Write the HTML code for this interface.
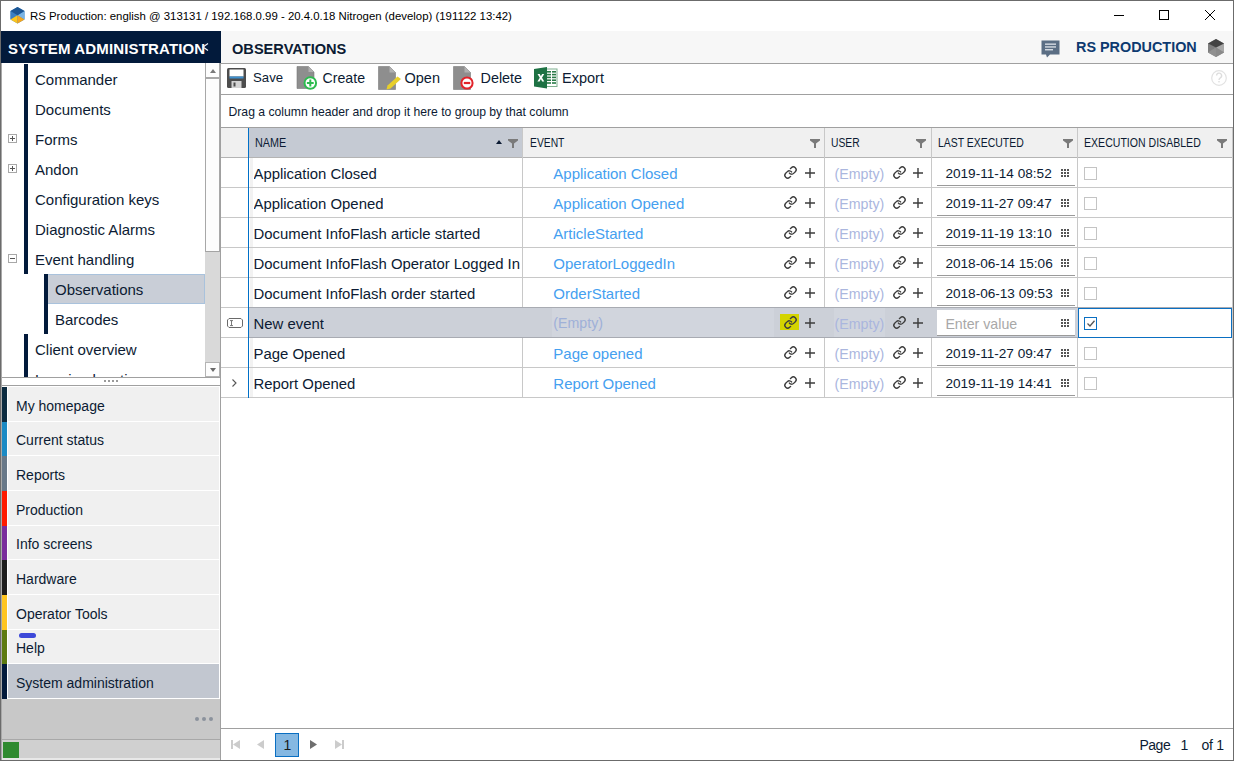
<!DOCTYPE html>
<html><head><meta charset="utf-8">
<style>
*{margin:0;padding:0;box-sizing:border-box}
html,body{width:1234px;height:761px;overflow:hidden;background:#fff}
body{position:relative;font-family:"Liberation Sans",sans-serif;color:#0c1b33}
.a{position:absolute}
.t{position:absolute;white-space:nowrap;line-height:1}
svg{position:absolute;overflow:visible}
</style></head><body>
<!-- window border -->
<div class="a" style="left:0;top:0;width:1234px;height:761px;border:1px solid #6b6b6b;z-index:50;pointer-events:none"></div>
<div class="a" style="left:1px;top:63px;width:1px;height:697px;background:#a8a8a8;z-index:49"></div>

<!-- TITLE BAR -->
<div class="a" style="left:1px;top:1px;width:1232px;height:30px;background:#fff"></div>
<svg style="left:10px;top:7px" width="15" height="17" viewBox="0 0 15 17">
  <polygon points="7.5,0 14.5,4 14.5,12.5 7.5,16.5 0.5,12.5 0.5,4" fill="#3b82c4"/>
  <polygon points="0.5,4 7.5,8.2 0.5,12.5" fill="#3a7fc2"/>
  <polygon points="14.5,4 14.5,12.5 7.5,8.2" fill="#7ab4e4"/>
  <polygon points="0.5,12.5 7.5,8.2 7.5,16.5" fill="#fcc51c"/>
  <polygon points="14.5,12.5 7.5,8.2 7.5,16.5" fill="#f5a61d"/>
  <polygon points="7.5,0 14.5,4 7.5,8.2 0.5,4" fill="#1c5694"/>
</svg>
<div class="t" style="left:30px;top:11.1px;font-size:11.4px;color:#000">RS Production: english @ 313131 / 192.168.0.99 - 20.4.0.18 Nitrogen (develop) (191122 13:42)</div>
<div class="a" style="left:1114px;top:15px;width:10px;height:1px;background:#000"></div>
<div class="a" style="left:1159px;top:10px;width:10px;height:10px;border:1px solid #000"></div>
<svg style="left:1205px;top:10px" width="10" height="10" viewBox="0 0 10 10"><path d="M0 0L10 10M10 0L0 10" stroke="#000" stroke-width="1"/></svg>


<!-- LEFT PANEL -->
<div class="a" style="left:1px;top:31px;width:220px;height:32px;background:#021a3b"></div>
<div class="t" style="left:8px;top:41px;font-size:15px;font-weight:bold;color:#fff;letter-spacing:0.15px">SYSTEM ADMINISTRATION</div>
<svg style="left:202px;top:43px" width="7" height="8" viewBox="0 0 7 8"><path d="M6 0.5L1 4L6 7.5" stroke="#f0f2f6" stroke-width="1.2" fill="none"/></svg>
<!-- tree -->
<div class="a" style="left:2px;top:63px;width:203px;height:314px;background:#fff;overflow:hidden">
  <div class="a" style="left:22px;top:1px;width:4px;height:210px;background:#021a3b"></div>
  <div class="a" style="left:42px;top:211px;width:4px;height:60px;background:#021a3b"></div>
  <div class="a" style="left:22px;top:271px;width:4px;height:43px;background:#021a3b"></div>
  <div class="a" style="left:43px;top:211px;width:160px;height:30px;background:#c9ced7;border:1px solid #a9c2dc;border-left:none"></div>
  <div class="a" style="left:42px;top:211px;width:4px;height:30px;background:#021a3b"></div>
  <div class="t" style="left:33px;top:9.3px;font-size:15px">Commander</div>
  <div class="t" style="left:33px;top:39.3px;font-size:15px">Documents</div>
  <div class="t" style="left:33px;top:69.3px;font-size:15px">Forms</div>
  <div class="t" style="left:33px;top:99.3px;font-size:15px">Andon</div>
  <div class="t" style="left:33px;top:129.3px;font-size:15px">Configuration keys</div>
  <div class="t" style="left:33px;top:159.3px;font-size:15px">Diagnostic Alarms</div>
  <div class="t" style="left:33px;top:189.3px;font-size:15px">Event handling</div>
  <div class="t" style="left:53px;top:219.3px;font-size:15px">Observations</div>
  <div class="t" style="left:53px;top:249.3px;font-size:15px">Barcodes</div>
  <div class="t" style="left:33px;top:279.3px;font-size:15px">Client overview</div>
  <div class="t" style="left:33px;top:309.3px;font-size:15px">Logging location</div>
  <!-- expanders -->
  <div class="a" style="left:6px;top:71px;width:9px;height:9px;border:1px solid #a8a8a8"></div>
  <div class="a" style="left:8px;top:75px;width:5px;height:1px;background:#555"></div>
  <div class="a" style="left:10px;top:73px;width:1px;height:5px;background:#555"></div>
  <div class="a" style="left:6px;top:101px;width:9px;height:9px;border:1px solid #a8a8a8"></div>
  <div class="a" style="left:8px;top:105px;width:5px;height:1px;background:#555"></div>
  <div class="a" style="left:10px;top:103px;width:1px;height:5px;background:#555"></div>
  <div class="a" style="left:6px;top:191px;width:9px;height:9px;border:1px solid #a8a8a8"></div>
  <div class="a" style="left:8px;top:195px;width:5px;height:1px;background:#555"></div>
</div>
<!-- scrollbar -->
<div class="a" style="left:205px;top:63px;width:15px;height:314px;background:#d9d9d9"></div>
<div class="a" style="left:205px;top:63px;width:15px;height:189px;background:#fdfdfd;border:1px solid #a8a8a8;border-top:none;border-bottom:1.5px solid #a4a4a4"></div>
<div class="a" style="left:206px;top:77px;width:13px;height:1.5px;background:#a8a8a8"></div>
<svg style="left:209.8px;top:69px" width="6" height="4" viewBox="0 0 6 4"><polygon points="3,0 6,4 0,4" fill="#7a7a7a"/></svg>
<div class="a" style="left:205px;top:362px;width:15px;height:15px;background:#fdfdfd;border:1px solid #b4b4b4"></div>
<svg style="left:209.8px;top:367.8px" width="6" height="4" viewBox="0 0 6 4"><polygon points="0,0 6,0 3,4" fill="#6a6a6a"/></svg>
<!-- vertical separator -->
<div class="a" style="left:220px;top:63px;width:1px;height:698px;background:#a0a0a0"></div>
<!-- splitter -->
<div class="a" style="left:2px;top:377px;width:218px;height:1px;background:#a0a0a0"></div>
<div class="a" style="left:2px;top:378px;width:218px;height:7px;background:#fff"></div>
<div class="a" style="left:2px;top:385px;width:218px;height:1px;background:#a0a0a0"></div>
<div class="a" style="left:104px;top:380px;width:2px;height:2px;background:#9a9a9a"></div><div class="a" style="left:108px;top:380px;width:2px;height:2px;background:#9a9a9a"></div><div class="a" style="left:112px;top:380px;width:2px;height:2px;background:#9a9a9a"></div><div class="a" style="left:116px;top:380px;width:2px;height:2px;background:#9a9a9a"></div>
<!-- nav buttons -->
<div class="a" style="left:2px;top:386px;width:218px;height:313px;background:#fff"></div>
<div class="a" style="left:8px;top:387.00px;width:211px;height:33.67px;background:#f0f0f0"></div>
<div class="a" style="left:2px;top:387.00px;width:5px;height:34.67px;background:#0c2b40"></div>
<div class="t" style="left:16px;top:398.50px;font-size:14px">My homepage</div>
<div class="a" style="left:8px;top:421.67px;width:211px;height:33.67px;background:#f0f0f0"></div>
<div class="a" style="left:2px;top:421.67px;width:5px;height:34.67px;background:#1b8ac4"></div>
<div class="t" style="left:16px;top:433.17px;font-size:14px">Current status</div>
<div class="a" style="left:8px;top:456.33px;width:211px;height:33.67px;background:#f0f0f0"></div>
<div class="a" style="left:2px;top:456.33px;width:5px;height:34.67px;background:#687888"></div>
<div class="t" style="left:16px;top:467.83px;font-size:14px">Reports</div>
<div class="a" style="left:8px;top:491.00px;width:211px;height:33.67px;background:#f0f0f0"></div>
<div class="a" style="left:2px;top:491.00px;width:5px;height:34.67px;background:#ff1a00"></div>
<div class="t" style="left:16px;top:502.50px;font-size:14px">Production</div>
<div class="a" style="left:8px;top:525.67px;width:211px;height:33.67px;background:#f0f0f0"></div>
<div class="a" style="left:2px;top:525.67px;width:5px;height:34.67px;background:#7a2d9c"></div>
<div class="t" style="left:16px;top:537.17px;font-size:14px">Info screens</div>
<div class="a" style="left:8px;top:560.34px;width:211px;height:33.67px;background:#f0f0f0"></div>
<div class="a" style="left:2px;top:560.34px;width:5px;height:34.67px;background:#1c1c1c"></div>
<div class="t" style="left:16px;top:571.84px;font-size:14px">Hardware</div>
<div class="a" style="left:8px;top:595.00px;width:211px;height:33.67px;background:#f0f0f0"></div>
<div class="a" style="left:2px;top:595.00px;width:5px;height:34.67px;background:#ffc520"></div>
<div class="t" style="left:16px;top:606.50px;font-size:14px">Operator Tools</div>
<div class="a" style="left:8px;top:629.67px;width:211px;height:33.67px;background:#f0f0f0"></div>
<div class="a" style="left:2px;top:629.67px;width:5px;height:34.67px;background:#5d7a10"></div>
<div class="t" style="left:16px;top:641.17px;font-size:14px">Help</div>
<div class="a" style="left:8px;top:664.34px;width:211px;height:33.67px;background:#c2c7d0"></div>
<div class="a" style="left:2px;top:664.34px;width:5px;height:34.67px;background:#021a3b"></div>
<div class="t" style="left:16px;top:675.84px;font-size:14px">System administration</div>
<div class="a" style="left:18.8px;top:633.3px;width:17.6px;height:5px;border-radius:3px;background:#3c48d8"></div>
<!-- gray area -->
<div class="a" style="left:2px;top:699px;width:218px;height:40px;background:#c8c8c8"></div>
<div class="a" style="left:195px;top:717px;width:4px;height:4px;border-radius:2px;background:#8b929c"></div>
<div class="a" style="left:202px;top:717px;width:4px;height:4px;border-radius:2px;background:#8b929c"></div>
<div class="a" style="left:209px;top:717px;width:4px;height:4px;border-radius:2px;background:#8b929c"></div>
<div class="a" style="left:2px;top:739px;width:218px;height:1px;background:#a8a8a8"></div>
<div class="a" style="left:2px;top:740px;width:218px;height:18px;background:#d0d0d0"></div><div class="a" style="left:2px;top:758px;width:218px;height:2px;background:#e8e8e8"></div>
<div class="a" style="left:3px;top:742px;width:16px;height:16px;background:#2f8a30"></div>

<!-- RIGHT HEADER -->
<div class="a" style="left:221px;top:31px;width:1012px;height:32px;background:#f7f7f7"></div>
<div class="t" style="left:232px;top:41.5px;font-size:14.6px;font-weight:bold;color:#0c1b33">OBSERVATIONS</div>
<svg style="left:1040.5px;top:39.8px" width="20" height="18" viewBox="0 0 20 18">
  <path d="M0.5 0.5H18.5V14.5H9L6 17.5L5 14.5H0.5Z" fill="#5b6e84"/>
  <rect x="4" y="3.5" width="11" height="1.3" fill="#dfe4ea"/>
  <rect x="4" y="6.3" width="11" height="1.3" fill="#dfe4ea"/>
  <rect x="4" y="9.1" width="8" height="1.3" fill="#dfe4ea"/>
</svg>
<div class="t" style="left:1076px;top:40.4px;font-size:14.4px;font-weight:bold;color:#0d3a70">RS PRODUCTION</div>
<svg style="left:1208px;top:38.5px" width="16" height="18" viewBox="0 0 16 18">
  <polygon points="8,0 16,4.6 16,13.4 8,18 0,13.4 0,4.6" fill="#8c8c8c"/>
  <polygon points="0,4.6 8,8.6 0,13.4" fill="#7e7e7e"/>
  <polygon points="16,4.6 16,13.4 8,8.6" fill="#a8a8a8"/>
  <polygon points="0,13.4 8,8.6 8,18" fill="#909090"/>
  <polygon points="16,13.4 8,8.6 8,18" fill="#8a8a8a"/>
  <polygon points="8,0 16,4.6 8,8.6 0,4.6" fill="#434343"/>
</svg>
<div class="a" style="left:221px;top:63px;width:1012px;height:1px;background:#a0a0a0"></div>
<!-- TOOLBAR -->
<svg style="left:227px;top:68px" width="19" height="20" viewBox="0 0 19 20">
  <rect x="0" y="0" width="19" height="20" rx="1.5" fill="#4d4d4d"/>
  <rect x="2.5" y="1.5" width="14" height="7" fill="#fff"/>
  <rect x="2.5" y="8.5" width="14" height="2" fill="#3d90cf"/>
  <rect x="4.5" y="13" width="10" height="7" fill="#d4d4d4"/>
  <rect x="6.5" y="14.5" width="2" height="4" fill="#4d4d4d"/>
</svg>
<div class="t" style="left:253px;top:71px;font-size:13.2px">Save</div>
<svg style="left:296px;top:66px" width="23" height="24" viewBox="0 0 23 24">
  <path d="M1 0.5H12.5L18 6V22.5H1Z" fill="#8e8e8e" stroke="#7a7a7a" stroke-width="0.6"/>
  <path d="M12.5 0.5V6H18Z" fill="#b0b0b0"/>
  <circle cx="14.3" cy="17" r="5.8" fill="#fff" stroke="#2dbb4f" stroke-width="2"/>
  <path d="M14.3 13.6V20.4M10.9 17H17.7" stroke="#2dbb4f" stroke-width="2"/>
</svg>
<div class="t" style="left:322.5px;top:71px;font-size:14.2px">Create</div>
<svg style="left:378px;top:66px" width="24" height="24" viewBox="0 0 24 24">
  <path d="M0.5 0.5H11.5L17.5 6.5V23.5H0.5Z" fill="#8e8e8e" stroke="#7a7a7a" stroke-width="0.6"/>
  <path d="M11.5 0.5V6.5H17.5Z" fill="#b0b0b0"/>
  <path d="M19.5 10.5L23 13L12.5 22.5L8.5 23.5L9.5 19.5Z" fill="#e8cf2a"/>
</svg>
<div class="t" style="left:404.5px;top:71px;font-size:14.5px">Open</div>
<svg style="left:453px;top:66px" width="23" height="24" viewBox="0 0 23 24">
  <path d="M0.5 0.5H11.5L17.5 6.5V23.5H0.5Z" fill="#8e8e8e" stroke="#7a7a7a" stroke-width="0.6"/>
  <path d="M11.5 0.5V6.5H17.5Z" fill="#b0b0b0"/>
  <circle cx="14" cy="17" r="5.6" fill="#fff" stroke="#e2242b" stroke-width="2"/>
  <path d="M10.8 17H17.2" stroke="#e2242b" stroke-width="2.2"/>
</svg>
<div class="t" style="left:480.5px;top:71px;font-size:14.4px">Delete</div>
<svg style="left:534px;top:67px" width="24" height="22" viewBox="0 0 24 22">
  <rect x="12" y="2" width="11" height="17.5" fill="#fff" stroke="#7fb08f" stroke-width="1"/>
  <g fill="#2a7a47"><rect x="13" y="4" width="4" height="1.6"/><rect x="18" y="4" width="4" height="1.6"/><rect x="13" y="6.8" width="4" height="1.6"/><rect x="18" y="6.8" width="4" height="1.6"/><rect x="13" y="9.6" width="4" height="1.6"/><rect x="18" y="9.6" width="4" height="1.6"/><rect x="13" y="12.4" width="4" height="1.6"/><rect x="18" y="12.4" width="4" height="1.6"/><rect x="13" y="15.2" width="4" height="1.6"/><rect x="18" y="15.2" width="4" height="1.6"/></g>
  <path d="M0 2L13 0V21.5L0 19.5Z" fill="#1e7244"/>
  <path d="M3.5 7H5.7L6.9 9.3L8.1 7H10.2L8 10.7L10.3 14.4H8.1L6.9 12.1L5.6 14.4H3.4L5.8 10.7Z" fill="#fff"/>
</svg>
<div class="t" style="left:562px;top:71px;font-size:14.5px">Export</div>
<svg style="left:1211px;top:70px" width="16" height="16" viewBox="0 0 16 16">
  <circle cx="8" cy="8" r="7.3" fill="none" stroke="#e2e2e2" stroke-width="1.2"/>
  <path d="M5.6 5.6A2.5 2.5 0 1 1 9.3 7.8C8.4 8.3 8 8.8 8 9.9" fill="none" stroke="#dddddd" stroke-width="1.4"/><rect x="7.3" y="11" width="1.4" height="1.4" fill="#dddddd"/>
</svg>
<div class="a" style="left:221px;top:94px;width:1012px;height:1px;background:#a0a0a0"></div>
<!-- GROUP PANEL -->
<div class="t" style="left:228.5px;top:106.3px;font-size:12.2px">Drag a column header and drop it here to group by that column</div>
<div class="a" style="left:221px;top:127px;width:1012px;height:1px;background:#a0a0a0"></div>

<!-- GRID HEADER -->
<div class="a" style="left:221px;top:128px;width:1011px;height:29px;background:#f0f0f0"></div>
<div class="a" style="left:249px;top:128px;width:273px;height:29px;background:#c5cad3"></div>
<div class="a" style="left:221px;top:157px;width:1011px;height:1px;background:#b4b4b4"></div>
<div class="a" style="left:522px;top:128px;width:1px;height:270px;background:#c8c8c8"></div>
<div class="a" style="left:824px;top:128px;width:1px;height:270px;background:#c8c8c8"></div>
<div class="a" style="left:931px;top:128px;width:1px;height:270px;background:#c8c8c8"></div>
<div class="a" style="left:1077px;top:128px;width:1px;height:270px;background:#c8c8c8"></div>
<div class="a" style="left:1232px;top:128px;width:1px;height:270px;background:#c8c8c8"></div>
<div class="t" style="left:254.5px;top:136.6px;font-size:12px;transform:scaleX(0.9);transform-origin:0 0">NAME</div>
<div class="t" style="left:530px;top:136.6px;font-size:12px;transform:scaleX(0.86);transform-origin:0 0">EVENT</div>
<div class="t" style="left:831px;top:136.6px;font-size:12px;transform:scaleX(0.86);transform-origin:0 0">USER</div>
<div class="t" style="left:938px;top:136.6px;font-size:12px;transform:scaleX(0.87);transform-origin:0 0">LAST EXECUTED</div>
<div class="t" style="left:1084px;top:136.6px;font-size:12px;transform:scaleX(0.88);transform-origin:0 0">EXECUTION DISABLED</div>
<svg style="left:495.5px;top:140px" width="6" height="4" viewBox="0 0 6 4"><polygon points="3,0 6,4 0,4" fill="#0c1b33"/></svg>
<svg style="left:507.5px;top:139px" width="10" height="9" viewBox="0 0 10 9"><path d="M0 0H10V1.5L6 4.5V9H4V4.5L0 1.5Z" fill="#7a7a7a"/></svg>
<svg style="left:809.5px;top:139px" width="10" height="9" viewBox="0 0 10 9"><path d="M0 0H10V1.5L6 4.5V9H4V4.5L0 1.5Z" fill="#7a7a7a"/></svg>
<svg style="left:916.3px;top:139px" width="10" height="9" viewBox="0 0 10 9"><path d="M0 0H10V1.5L6 4.5V9H4V4.5L0 1.5Z" fill="#7a7a7a"/></svg>
<svg style="left:1062.5px;top:139px" width="10" height="9" viewBox="0 0 10 9"><path d="M0 0H10V1.5L6 4.5V9H4V4.5L0 1.5Z" fill="#7a7a7a"/></svg>
<svg style="left:1216.5px;top:139px" width="10" height="9" viewBox="0 0 10 9"><path d="M0 0H10V1.5L6 4.5V9H4V4.5L0 1.5Z" fill="#7a7a7a"/></svg>
<div class="a" style="left:221px;top:187px;width:1011px;height:1px;background:#c8c8c8"></div>
<div class="t" style="left:253.5px;top:166.8px;font-size:14.9px;max-width:267.5px;overflow:hidden">Application Closed</div>
<div class="t" style="left:553.3px;top:165.7px;font-size:15px;color:#45a0f0">Application Closed</div>
<svg style="left:783.5px;top:166px" width="13" height="13" viewBox="0.5 0.5 23 23"><g fill="none" stroke="#3c3c3c" stroke-width="2.4" stroke-linecap="round"><path d="M10 13a5 5 0 0 0 7.54.54l3-3a5 5 0 0 0-7.07-7.07l-1.72 1.71"/><path d="M14 11a5 5 0 0 0-7.54-.54l-3 3a5 5 0 0 0 7.07 7.07l1.71-1.71"/></g></svg><svg style="left:805px;top:168px" width="10" height="10" viewBox="0 0 10 10"><path d="M5 0V10M0 5H10" stroke="#3c3c3c" stroke-width="1.4"/></svg>
<div class="t" style="left:834.6px;top:166.9px;font-size:14.2px;color:#aab6de">(Empty)</div>
<svg style="left:893.2px;top:166px" width="13" height="13" viewBox="0.5 0.5 23 23"><g fill="none" stroke="#3c3c3c" stroke-width="2.4" stroke-linecap="round"><path d="M10 13a5 5 0 0 0 7.54.54l3-3a5 5 0 0 0-7.07-7.07l-1.72 1.71"/><path d="M14 11a5 5 0 0 0-7.54-.54l-3 3a5 5 0 0 0 7.07 7.07l1.71-1.71"/></g></svg><svg style="left:912.8px;top:168px" width="10" height="10" viewBox="0 0 10 10"><path d="M5 0V10M0 5H10" stroke="#3c3c3c" stroke-width="1.4"/></svg>
<div class="t" style="left:945.4px;top:166.5px;font-size:13.6px">2019-11-14 08:52</div>
<div class="a" style="left:937px;top:185px;width:138px;height:1px;background:#9a9a9a"></div>
<div class="a" style="left:1084px;top:166.5px;width:13px;height:13px;border:1px solid #c4c4c4;background:#fff"></div>
<svg style="left:1061px;top:169.3px" width="8" height="8" viewBox="0 0 8 8" fill="#555"><rect x="0" y="0" width="2" height="2"/><rect x="0" y="3" width="2" height="2"/><rect x="0" y="6" width="2" height="2"/><rect x="3" y="0" width="2" height="2"/><rect x="3" y="3" width="2" height="2"/><rect x="3" y="6" width="2" height="2"/><rect x="6" y="0" width="2" height="2"/><rect x="6" y="3" width="2" height="2"/><rect x="6" y="6" width="2" height="2"/></svg>
<div class="a" style="left:221px;top:217px;width:1011px;height:1px;background:#c8c8c8"></div>
<div class="t" style="left:253.5px;top:196.8px;font-size:14.9px;max-width:267.5px;overflow:hidden">Application Opened</div>
<div class="t" style="left:553.3px;top:195.7px;font-size:15px;color:#45a0f0">Application Opened</div>
<svg style="left:783.5px;top:196px" width="13" height="13" viewBox="0.5 0.5 23 23"><g fill="none" stroke="#3c3c3c" stroke-width="2.4" stroke-linecap="round"><path d="M10 13a5 5 0 0 0 7.54.54l3-3a5 5 0 0 0-7.07-7.07l-1.72 1.71"/><path d="M14 11a5 5 0 0 0-7.54-.54l-3 3a5 5 0 0 0 7.07 7.07l1.71-1.71"/></g></svg><svg style="left:805px;top:198px" width="10" height="10" viewBox="0 0 10 10"><path d="M5 0V10M0 5H10" stroke="#3c3c3c" stroke-width="1.4"/></svg>
<div class="t" style="left:834.6px;top:196.9px;font-size:14.2px;color:#aab6de">(Empty)</div>
<svg style="left:893.2px;top:196px" width="13" height="13" viewBox="0.5 0.5 23 23"><g fill="none" stroke="#3c3c3c" stroke-width="2.4" stroke-linecap="round"><path d="M10 13a5 5 0 0 0 7.54.54l3-3a5 5 0 0 0-7.07-7.07l-1.72 1.71"/><path d="M14 11a5 5 0 0 0-7.54-.54l-3 3a5 5 0 0 0 7.07 7.07l1.71-1.71"/></g></svg><svg style="left:912.8px;top:198px" width="10" height="10" viewBox="0 0 10 10"><path d="M5 0V10M0 5H10" stroke="#3c3c3c" stroke-width="1.4"/></svg>
<div class="t" style="left:945.4px;top:196.5px;font-size:13.6px">2019-11-27 09:47</div>
<div class="a" style="left:937px;top:215px;width:138px;height:1px;background:#9a9a9a"></div>
<div class="a" style="left:1084px;top:196.5px;width:13px;height:13px;border:1px solid #c4c4c4;background:#fff"></div>
<svg style="left:1061px;top:199.3px" width="8" height="8" viewBox="0 0 8 8" fill="#555"><rect x="0" y="0" width="2" height="2"/><rect x="0" y="3" width="2" height="2"/><rect x="0" y="6" width="2" height="2"/><rect x="3" y="0" width="2" height="2"/><rect x="3" y="3" width="2" height="2"/><rect x="3" y="6" width="2" height="2"/><rect x="6" y="0" width="2" height="2"/><rect x="6" y="3" width="2" height="2"/><rect x="6" y="6" width="2" height="2"/></svg>
<div class="a" style="left:221px;top:247px;width:1011px;height:1px;background:#c8c8c8"></div>
<div class="t" style="left:253.5px;top:226.8px;font-size:14.9px;max-width:267.5px;overflow:hidden">Document InfoFlash article started</div>
<div class="t" style="left:553.3px;top:225.7px;font-size:15px;color:#45a0f0">ArticleStarted</div>
<svg style="left:783.5px;top:226px" width="13" height="13" viewBox="0.5 0.5 23 23"><g fill="none" stroke="#3c3c3c" stroke-width="2.4" stroke-linecap="round"><path d="M10 13a5 5 0 0 0 7.54.54l3-3a5 5 0 0 0-7.07-7.07l-1.72 1.71"/><path d="M14 11a5 5 0 0 0-7.54-.54l-3 3a5 5 0 0 0 7.07 7.07l1.71-1.71"/></g></svg><svg style="left:805px;top:228px" width="10" height="10" viewBox="0 0 10 10"><path d="M5 0V10M0 5H10" stroke="#3c3c3c" stroke-width="1.4"/></svg>
<div class="t" style="left:834.6px;top:226.9px;font-size:14.2px;color:#aab6de">(Empty)</div>
<svg style="left:893.2px;top:226px" width="13" height="13" viewBox="0.5 0.5 23 23"><g fill="none" stroke="#3c3c3c" stroke-width="2.4" stroke-linecap="round"><path d="M10 13a5 5 0 0 0 7.54.54l3-3a5 5 0 0 0-7.07-7.07l-1.72 1.71"/><path d="M14 11a5 5 0 0 0-7.54-.54l-3 3a5 5 0 0 0 7.07 7.07l1.71-1.71"/></g></svg><svg style="left:912.8px;top:228px" width="10" height="10" viewBox="0 0 10 10"><path d="M5 0V10M0 5H10" stroke="#3c3c3c" stroke-width="1.4"/></svg>
<div class="t" style="left:945.4px;top:226.5px;font-size:13.6px">2019-11-19 13:10</div>
<div class="a" style="left:937px;top:245px;width:138px;height:1px;background:#9a9a9a"></div>
<div class="a" style="left:1084px;top:226.5px;width:13px;height:13px;border:1px solid #c4c4c4;background:#fff"></div>
<svg style="left:1061px;top:229.3px" width="8" height="8" viewBox="0 0 8 8" fill="#555"><rect x="0" y="0" width="2" height="2"/><rect x="0" y="3" width="2" height="2"/><rect x="0" y="6" width="2" height="2"/><rect x="3" y="0" width="2" height="2"/><rect x="3" y="3" width="2" height="2"/><rect x="3" y="6" width="2" height="2"/><rect x="6" y="0" width="2" height="2"/><rect x="6" y="3" width="2" height="2"/><rect x="6" y="6" width="2" height="2"/></svg>
<div class="a" style="left:221px;top:277px;width:1011px;height:1px;background:#c8c8c8"></div>
<div class="t" style="left:253.5px;top:256.8px;font-size:14.9px;max-width:267.5px;overflow:hidden">Document InfoFlash Operator Logged In</div>
<div class="t" style="left:553.3px;top:255.7px;font-size:15px;color:#45a0f0">OperatorLoggedIn</div>
<svg style="left:783.5px;top:256px" width="13" height="13" viewBox="0.5 0.5 23 23"><g fill="none" stroke="#3c3c3c" stroke-width="2.4" stroke-linecap="round"><path d="M10 13a5 5 0 0 0 7.54.54l3-3a5 5 0 0 0-7.07-7.07l-1.72 1.71"/><path d="M14 11a5 5 0 0 0-7.54-.54l-3 3a5 5 0 0 0 7.07 7.07l1.71-1.71"/></g></svg><svg style="left:805px;top:258px" width="10" height="10" viewBox="0 0 10 10"><path d="M5 0V10M0 5H10" stroke="#3c3c3c" stroke-width="1.4"/></svg>
<div class="t" style="left:834.6px;top:256.9px;font-size:14.2px;color:#aab6de">(Empty)</div>
<svg style="left:893.2px;top:256px" width="13" height="13" viewBox="0.5 0.5 23 23"><g fill="none" stroke="#3c3c3c" stroke-width="2.4" stroke-linecap="round"><path d="M10 13a5 5 0 0 0 7.54.54l3-3a5 5 0 0 0-7.07-7.07l-1.72 1.71"/><path d="M14 11a5 5 0 0 0-7.54-.54l-3 3a5 5 0 0 0 7.07 7.07l1.71-1.71"/></g></svg><svg style="left:912.8px;top:258px" width="10" height="10" viewBox="0 0 10 10"><path d="M5 0V10M0 5H10" stroke="#3c3c3c" stroke-width="1.4"/></svg>
<div class="t" style="left:945.4px;top:256.5px;font-size:13.6px">2018-06-14 15:06</div>
<div class="a" style="left:937px;top:275px;width:138px;height:1px;background:#9a9a9a"></div>
<div class="a" style="left:1084px;top:256.5px;width:13px;height:13px;border:1px solid #c4c4c4;background:#fff"></div>
<svg style="left:1061px;top:259.3px" width="8" height="8" viewBox="0 0 8 8" fill="#555"><rect x="0" y="0" width="2" height="2"/><rect x="0" y="3" width="2" height="2"/><rect x="0" y="6" width="2" height="2"/><rect x="3" y="0" width="2" height="2"/><rect x="3" y="3" width="2" height="2"/><rect x="3" y="6" width="2" height="2"/><rect x="6" y="0" width="2" height="2"/><rect x="6" y="3" width="2" height="2"/><rect x="6" y="6" width="2" height="2"/></svg>
<div class="a" style="left:221px;top:307px;width:1011px;height:1px;background:#c8c8c8"></div>
<div class="t" style="left:253.5px;top:286.8px;font-size:14.9px;max-width:267.5px;overflow:hidden">Document InfoFlash order started</div>
<div class="t" style="left:553.3px;top:285.7px;font-size:15px;color:#45a0f0">OrderStarted</div>
<svg style="left:783.5px;top:286px" width="13" height="13" viewBox="0.5 0.5 23 23"><g fill="none" stroke="#3c3c3c" stroke-width="2.4" stroke-linecap="round"><path d="M10 13a5 5 0 0 0 7.54.54l3-3a5 5 0 0 0-7.07-7.07l-1.72 1.71"/><path d="M14 11a5 5 0 0 0-7.54-.54l-3 3a5 5 0 0 0 7.07 7.07l1.71-1.71"/></g></svg><svg style="left:805px;top:288px" width="10" height="10" viewBox="0 0 10 10"><path d="M5 0V10M0 5H10" stroke="#3c3c3c" stroke-width="1.4"/></svg>
<div class="t" style="left:834.6px;top:286.9px;font-size:14.2px;color:#aab6de">(Empty)</div>
<svg style="left:893.2px;top:286px" width="13" height="13" viewBox="0.5 0.5 23 23"><g fill="none" stroke="#3c3c3c" stroke-width="2.4" stroke-linecap="round"><path d="M10 13a5 5 0 0 0 7.54.54l3-3a5 5 0 0 0-7.07-7.07l-1.72 1.71"/><path d="M14 11a5 5 0 0 0-7.54-.54l-3 3a5 5 0 0 0 7.07 7.07l1.71-1.71"/></g></svg><svg style="left:912.8px;top:288px" width="10" height="10" viewBox="0 0 10 10"><path d="M5 0V10M0 5H10" stroke="#3c3c3c" stroke-width="1.4"/></svg>
<div class="t" style="left:945.4px;top:286.5px;font-size:13.6px">2018-06-13 09:53</div>
<div class="a" style="left:937px;top:305px;width:138px;height:1px;background:#9a9a9a"></div>
<div class="a" style="left:1084px;top:286.5px;width:13px;height:13px;border:1px solid #c4c4c4;background:#fff"></div>
<svg style="left:1061px;top:289.3px" width="8" height="8" viewBox="0 0 8 8" fill="#555"><rect x="0" y="0" width="2" height="2"/><rect x="0" y="3" width="2" height="2"/><rect x="0" y="6" width="2" height="2"/><rect x="3" y="0" width="2" height="2"/><rect x="3" y="3" width="2" height="2"/><rect x="3" y="6" width="2" height="2"/><rect x="6" y="0" width="2" height="2"/><rect x="6" y="3" width="2" height="2"/><rect x="6" y="6" width="2" height="2"/></svg>
<div class="a" style="left:221px;top:307px;width:1011px;height:1px;background:#c8c8c8"></div><div class="a" style="left:249px;top:307px;width:983px;height:1px;background:#a8abb2"></div>
<div class="a" style="left:249px;top:308px;width:983px;height:29px;background:#ccd0d8"></div><div class="a" style="left:552px;top:308px;width:222px;height:29px;background:#d1d5dd"></div><div class="a" style="left:834px;top:308px;width:51px;height:29px;background:#d1d5dd"></div>
<div class="a" style="left:221px;top:337px;width:1011px;height:1px;background:#c8c8c8"></div><div class="a" style="left:249px;top:337px;width:983px;height:1px;background:#a8abb2"></div>
<div class="t" style="left:253.5px;top:316.8px;font-size:14.9px;max-width:267.5px;overflow:hidden">New event</div>
<div class="t" style="left:553.3px;top:316.3px;font-size:14.2px;color:#9fb0d8">(Empty)</div>
<div class="a" style="left:780px;top:314px;width:19px;height:16px;background:#d4d400"></div>
<svg style="left:783.5px;top:316px" width="13" height="13" viewBox="0.5 0.5 23 23"><g fill="none" stroke="#3c3c3c" stroke-width="2.4" stroke-linecap="round"><path d="M10 13a5 5 0 0 0 7.54.54l3-3a5 5 0 0 0-7.07-7.07l-1.72 1.71"/><path d="M14 11a5 5 0 0 0-7.54-.54l-3 3a5 5 0 0 0 7.07 7.07l1.71-1.71"/></g></svg><svg style="left:805px;top:318px" width="10" height="10" viewBox="0 0 10 10"><path d="M5 0V10M0 5H10" stroke="#3c3c3c" stroke-width="1.4"/></svg>
<div class="t" style="left:834.6px;top:316.9px;font-size:14.2px;color:#aab6de">(Empty)</div>
<svg style="left:893.2px;top:316px" width="13" height="13" viewBox="0.5 0.5 23 23"><g fill="none" stroke="#3c3c3c" stroke-width="2.4" stroke-linecap="round"><path d="M10 13a5 5 0 0 0 7.54.54l3-3a5 5 0 0 0-7.07-7.07l-1.72 1.71"/><path d="M14 11a5 5 0 0 0-7.54-.54l-3 3a5 5 0 0 0 7.07 7.07l1.71-1.71"/></g></svg><svg style="left:912.8px;top:318px" width="10" height="10" viewBox="0 0 10 10"><path d="M5 0V10M0 5H10" stroke="#3c3c3c" stroke-width="1.4"/></svg>
<div class="a" style="left:937px;top:310px;width:138px;height:26px;background:#fff;border-bottom:1px solid #9a9a9a"></div>
<div class="t" style="left:945.4px;top:316.9px;font-size:14.2px;color:#a8a8a8">Enter value</div>
<div class="a" style="left:1078px;top:308px;width:154px;height:30px;background:#fff;border:1.3px solid #0a6fc2"></div>
<div class="a" style="left:1084px;top:317px;width:13px;height:13px;border:1.3px solid #0a6fc2;background:#fff"></div>
<svg style="left:1087px;top:320px" width="8" height="7" viewBox="0 0 8 7"><path d="M0.5 3.5L3 6L7.5 0.8" fill="none" stroke="#555" stroke-width="1.3"/></svg>
<svg style="left:1061px;top:319.3px" width="8" height="8" viewBox="0 0 8 8" fill="#555"><rect x="0" y="0" width="2" height="2"/><rect x="0" y="3" width="2" height="2"/><rect x="0" y="6" width="2" height="2"/><rect x="3" y="0" width="2" height="2"/><rect x="3" y="3" width="2" height="2"/><rect x="3" y="6" width="2" height="2"/><rect x="6" y="0" width="2" height="2"/><rect x="6" y="3" width="2" height="2"/><rect x="6" y="6" width="2" height="2"/></svg>
<div class="a" style="left:221px;top:367px;width:1011px;height:1px;background:#c8c8c8"></div>
<div class="t" style="left:253.5px;top:346.8px;font-size:14.9px;max-width:267.5px;overflow:hidden">Page Opened</div>
<div class="t" style="left:553.3px;top:345.7px;font-size:15px;color:#45a0f0">Page opened</div>
<svg style="left:783.5px;top:346px" width="13" height="13" viewBox="0.5 0.5 23 23"><g fill="none" stroke="#3c3c3c" stroke-width="2.4" stroke-linecap="round"><path d="M10 13a5 5 0 0 0 7.54.54l3-3a5 5 0 0 0-7.07-7.07l-1.72 1.71"/><path d="M14 11a5 5 0 0 0-7.54-.54l-3 3a5 5 0 0 0 7.07 7.07l1.71-1.71"/></g></svg><svg style="left:805px;top:348px" width="10" height="10" viewBox="0 0 10 10"><path d="M5 0V10M0 5H10" stroke="#3c3c3c" stroke-width="1.4"/></svg>
<div class="t" style="left:834.6px;top:346.9px;font-size:14.2px;color:#aab6de">(Empty)</div>
<svg style="left:893.2px;top:346px" width="13" height="13" viewBox="0.5 0.5 23 23"><g fill="none" stroke="#3c3c3c" stroke-width="2.4" stroke-linecap="round"><path d="M10 13a5 5 0 0 0 7.54.54l3-3a5 5 0 0 0-7.07-7.07l-1.72 1.71"/><path d="M14 11a5 5 0 0 0-7.54-.54l-3 3a5 5 0 0 0 7.07 7.07l1.71-1.71"/></g></svg><svg style="left:912.8px;top:348px" width="10" height="10" viewBox="0 0 10 10"><path d="M5 0V10M0 5H10" stroke="#3c3c3c" stroke-width="1.4"/></svg>
<div class="t" style="left:945.4px;top:346.5px;font-size:13.6px">2019-11-27 09:47</div>
<div class="a" style="left:937px;top:365px;width:138px;height:1px;background:#9a9a9a"></div>
<div class="a" style="left:1084px;top:346.5px;width:13px;height:13px;border:1px solid #c4c4c4;background:#fff"></div>
<svg style="left:1061px;top:349.3px" width="8" height="8" viewBox="0 0 8 8" fill="#555"><rect x="0" y="0" width="2" height="2"/><rect x="0" y="3" width="2" height="2"/><rect x="0" y="6" width="2" height="2"/><rect x="3" y="0" width="2" height="2"/><rect x="3" y="3" width="2" height="2"/><rect x="3" y="6" width="2" height="2"/><rect x="6" y="0" width="2" height="2"/><rect x="6" y="3" width="2" height="2"/><rect x="6" y="6" width="2" height="2"/></svg>
<div class="a" style="left:221px;top:397px;width:1011px;height:1px;background:#c8c8c8"></div>
<div class="t" style="left:253.5px;top:376.8px;font-size:14.9px;max-width:267.5px;overflow:hidden">Report Opened</div>
<div class="t" style="left:553.3px;top:375.7px;font-size:15px;color:#45a0f0">Report Opened</div>
<svg style="left:783.5px;top:376px" width="13" height="13" viewBox="0.5 0.5 23 23"><g fill="none" stroke="#3c3c3c" stroke-width="2.4" stroke-linecap="round"><path d="M10 13a5 5 0 0 0 7.54.54l3-3a5 5 0 0 0-7.07-7.07l-1.72 1.71"/><path d="M14 11a5 5 0 0 0-7.54-.54l-3 3a5 5 0 0 0 7.07 7.07l1.71-1.71"/></g></svg><svg style="left:805px;top:378px" width="10" height="10" viewBox="0 0 10 10"><path d="M5 0V10M0 5H10" stroke="#3c3c3c" stroke-width="1.4"/></svg>
<div class="t" style="left:834.6px;top:376.9px;font-size:14.2px;color:#aab6de">(Empty)</div>
<svg style="left:893.2px;top:376px" width="13" height="13" viewBox="0.5 0.5 23 23"><g fill="none" stroke="#3c3c3c" stroke-width="2.4" stroke-linecap="round"><path d="M10 13a5 5 0 0 0 7.54.54l3-3a5 5 0 0 0-7.07-7.07l-1.72 1.71"/><path d="M14 11a5 5 0 0 0-7.54-.54l-3 3a5 5 0 0 0 7.07 7.07l1.71-1.71"/></g></svg><svg style="left:912.8px;top:378px" width="10" height="10" viewBox="0 0 10 10"><path d="M5 0V10M0 5H10" stroke="#3c3c3c" stroke-width="1.4"/></svg>
<div class="t" style="left:945.4px;top:376.5px;font-size:13.6px">2019-11-19 14:41</div>
<div class="a" style="left:937px;top:395px;width:138px;height:1px;background:#9a9a9a"></div>
<div class="a" style="left:1084px;top:376.5px;width:13px;height:13px;border:1px solid #c4c4c4;background:#fff"></div>
<svg style="left:1061px;top:379.3px" width="8" height="8" viewBox="0 0 8 8" fill="#555"><rect x="0" y="0" width="2" height="2"/><rect x="0" y="3" width="2" height="2"/><rect x="0" y="6" width="2" height="2"/><rect x="3" y="0" width="2" height="2"/><rect x="3" y="3" width="2" height="2"/><rect x="3" y="6" width="2" height="2"/><rect x="6" y="0" width="2" height="2"/><rect x="6" y="3" width="2" height="2"/><rect x="6" y="6" width="2" height="2"/></svg>
<div class="a" style="left:250px;top:158px;width:3px;height:29px;background:#f2f2f2"></div><div class="a" style="left:250px;top:188px;width:3px;height:29px;background:#f2f2f2"></div><div class="a" style="left:250px;top:218px;width:3px;height:29px;background:#f2f2f2"></div><div class="a" style="left:250px;top:248px;width:3px;height:29px;background:#f2f2f2"></div><div class="a" style="left:250px;top:278px;width:3px;height:29px;background:#f2f2f2"></div><div class="a" style="left:250px;top:338px;width:3px;height:29px;background:#f2f2f2"></div><div class="a" style="left:250px;top:368px;width:3px;height:29px;background:#f2f2f2"></div>
<div class="a" style="left:247.9px;top:128px;width:1.4px;height:270px;background:#0070c8"></div>
<svg style="left:227px;top:317.5px" width="16" height="10" viewBox="0 0 16 10"><path d="M2 0.5H14L15.5 2V8L14 9.5H2L0.5 8V2Z" fill="none" stroke="#6a6a6a" stroke-width="1"/><path d="M3 2.6H6M4.5 2.6V7.6M3 7.6H6" stroke="#6a6a6a" stroke-width="0.9"/></svg>
<svg style="left:232px;top:379px" width="5" height="8" viewBox="0 0 5 8"><path d="M0.5 0.5L4 4L0.5 7.5" fill="none" stroke="#555" stroke-width="1.1"/></svg>
<div class="a" style="left:221px;top:728px;width:1012px;height:1px;background:#a0a0a0"></div>
<svg style="left:231px;top:740px" width="9" height="9" viewBox="0 0 9 9"><rect x="0" y="0" width="2" height="9" fill="#cccccc"/><polygon points="9,0 9,9 2,4.5" fill="#cccccc"/></svg>
<svg style="left:257px;top:740px" width="7" height="9" viewBox="0 0 7 9"><polygon points="7,0 7,9 0,4.5" fill="#cccccc"/></svg>
<div class="a" style="left:275px;top:733px;width:24px;height:24px;background:#85b8e2;border:1.4px solid #0a6fc2"></div>
<div class="t" style="left:283.5px;top:738px;font-size:14px;color:#1a1a1a">1</div>
<svg style="left:310px;top:740px" width="7" height="9" viewBox="0 0 7 9"><polygon points="0,0 0,9 7,4.5" fill="#6e6e6e"/></svg>
<svg style="left:335px;top:740px" width="9" height="9" viewBox="0 0 9 9"><polygon points="0,0 0,9 7,4.5" fill="#cccccc"/><rect x="7" y="0" width="2" height="9" fill="#cccccc"/></svg>
<div class="t" style="left:1139.5px;top:737.6px;font-size:14px;letter-spacing:-0.5px">Page</div>
<div class="t" style="left:1180.5px;top:737.6px;font-size:14px">1</div>
<div class="t" style="left:1201.5px;top:737.6px;font-size:14px;letter-spacing:-0.3px">of 1</div>
</body></html>
